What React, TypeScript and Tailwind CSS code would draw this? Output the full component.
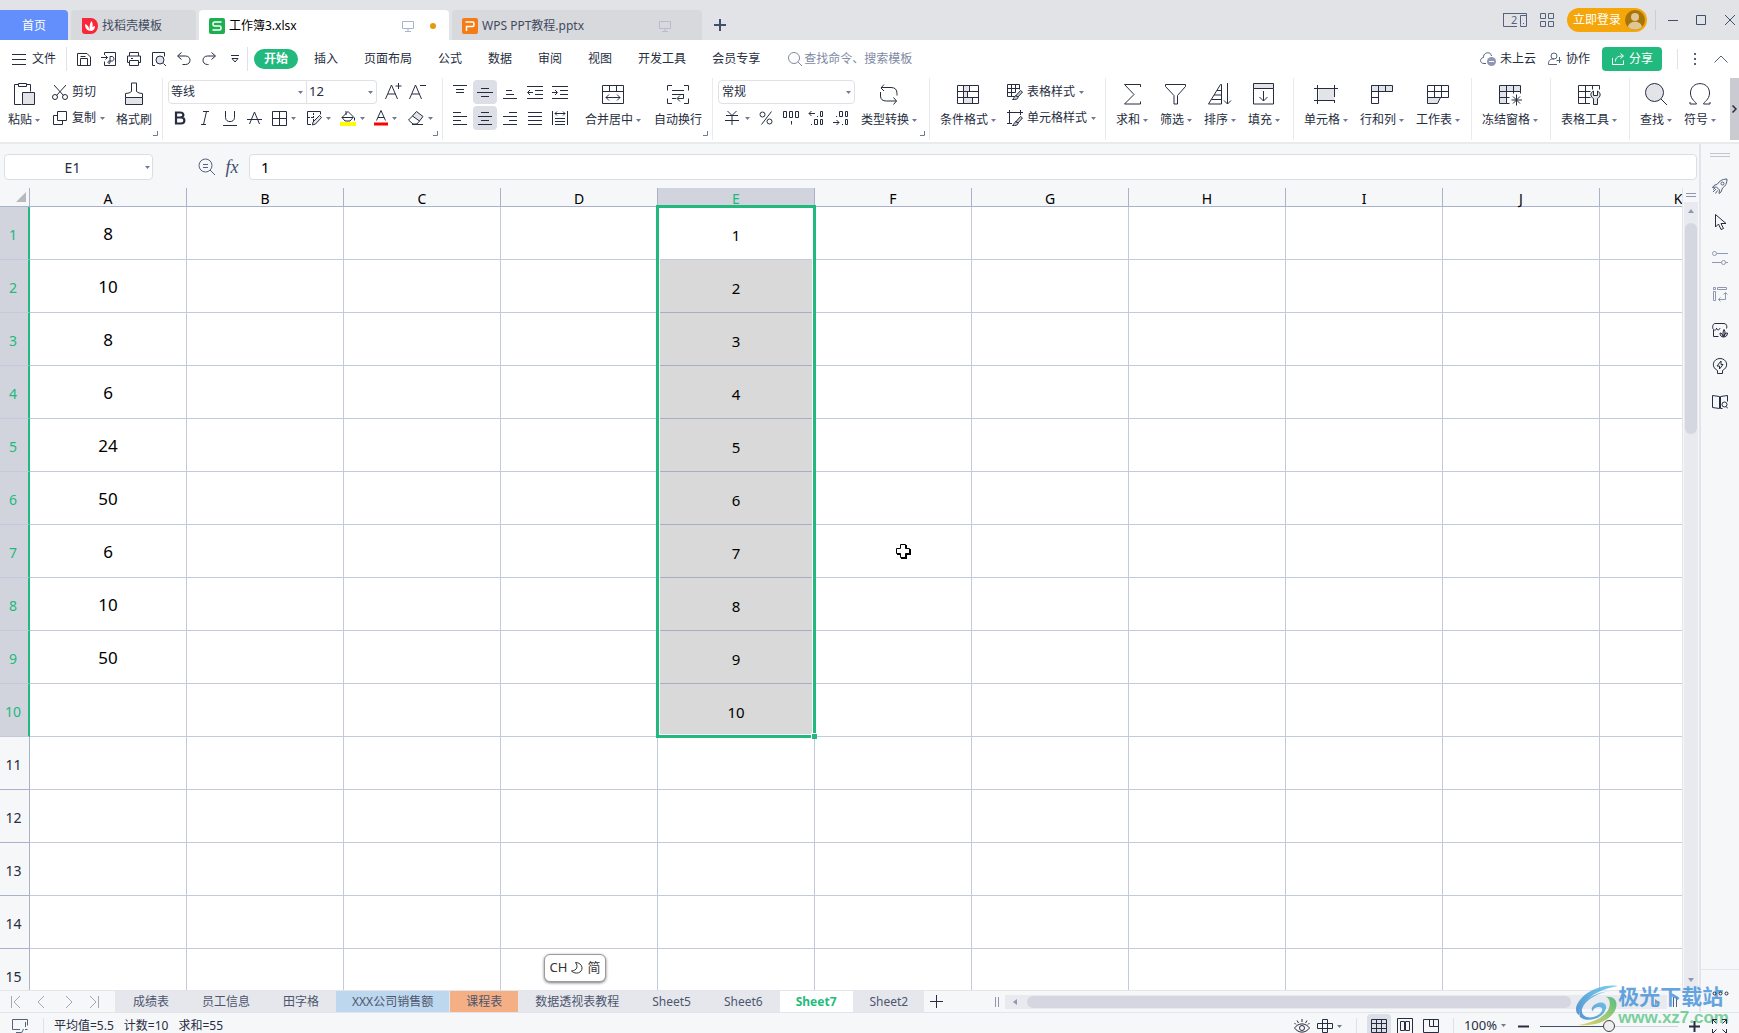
import React, { useState } from 'react';

interface IconProps {
  w?: number;
  h?: number;
  className?: string;
  children: React.ReactNode;
}

// Line icon: one unit of the view box is one pixel
function Icon({ w = 16, h = 16, className = '', children }: IconProps) {
  return (
    <svg
      width={w}
      height={h}
      viewBox={`0 0 ${w} ${h}`}
      fill="none"
      stroke="currentColor"
      strokeWidth={1}
      className={`shrink-0 ${className}`}
      aria-hidden="true"
    >
      {children}
    </svg>
  );
}

function Caret() {
  return (
    <svg width="5" height="3" viewBox="0 0 5 3" className="shrink-0 fill-[#6f7b96]" aria-hidden="true">
      <path d="M0 0h5L2.5 3z" />
    </svg>
  );
}

const soft = '#e3e4e8';

const icons = {
  save: (
    <Icon>
      <path d="M1.500 14.500v-12h9.500l3.500 3.500v8.500zM4.500 14v-6.500h7v6.500M4.500 5.500h5" />
    </Icon>
  ),
  exportPdf: (
    <Icon>
      <path d="M3.500 4v-2.500h11v13h-11v-4M0 6.500h6.500M4.500 4.500l2 2-2 2M8.500 12.500c-2 0-2-2.500 0-2.500h2.500c2.500 0 2.500-4.500 0-4.500H9v5.500c0 1-.5 1.500-1 1.500" />
    </Icon>
  ),
  print: (
    <Icon>
      <path d="M3.500 5v-3.500h9v3.500M3.500 11.500h-2v-6.500h13v6.500h-2M3.500 9.500h9v5h-9zM5 7.500h2" />
    </Icon>
  ),
  preview: (
    <Icon>
      <path d="M4 14.500h-2.500v-13h12v4M12.500 12.500l2.500 2.500" />
      <circle cx="9" cy="9" r="4" fill={soft} />
    </Icon>
  ),
  undo: (
    <Icon>
      <path d="M5.500 1.500l-4 3.500 4 3.500M2 5h7.500c6 0 6 8.500 0 8.500h-3" />
    </Icon>
  ),
  redo: (
    <Icon>
      <path d="M10.500 1.500l4 3.500-4 3.500M14 5h-7.500c-6 0-6 8.500 0 8.500h1" />
    </Icon>
  ),
  paste: (
    <Icon w={22} h={24}>
      <path d="M5 2.500h-3.500v20h7M14 2.500h3.500v7M5.500 1.500h8v3h-8z" />
      <path d="M9.500 10.500h12v12h-12z" fill={soft} />
    </Icon>
  ),
  cut: (
    <Icon>
      <path d="M2 1l9.500 10.500M14 1l-9.500 10.500" />
      <circle cx="3" cy="13" r="2.500" />
      <circle cx="13" cy="13" r="2.500" />
    </Icon>
  ),
  copy: (
    <Icon>
      <path d="M5.500 1.500h9v9h-9zM5 5.500h-3.500v9h9v-4" />
    </Icon>
  ),
  brush: (
    <Icon w={20} h={24}>
      <path d="M1.500 15.500h17v7h-17z" fill={soft} />
      <path d="M1.500 15.500v-4q4 0 6-2v-8.500h5v8.500q2 2 6 2v4" />
    </Icon>
  ),
  merge: (
    <Icon w={24} h={24}>
      <path d="M1.500 3.500h21v18h-21zM1.500 9.500h21M8.500 3.500v6M15.500 3.500v6M5 15.500h14M8 12.500l-3 3 3 3M16 12.500l3 3-3 3" />
    </Icon>
  ),
  wrap: (
    <Icon w={24} h={24}>
      <path d="M6 3.500h-4.500v5M18 3.500h4.500v5M6 21.500h-4.500v-5M18 21.500h4.500v-5M6 8.500h12M6 12.500h12M6 16.500h4M17.500 12.500v4h-6M14 13.500l-3 3 3 3" />
    </Icon>
  ),
  convert: (
    <Icon w={24} h={24}>
      <path d="M7 2.500l-3 3.500 3 3M4 5.500h10q6 0 6 6v2M3.500 10v4q0 5 6 5h10M16.500 15.500l3 3.500-3 3.500" />
    </Icon>
  ),
  condition: (
    <Icon w={24} h={24}>
      <path d="M7.500 3.500h5v6h-5zM7.500 9.500h4v6h-4zM7.500 15.500h9v6h-9z" fill={soft} stroke="none" />
      <path d="M1.500 3.500h21v18h-21zM1.500 9.500h21M1.500 15.500h21M7.500 3.500v18M13.500 3.500v6M11.500 9.500v6M16.500 15.500v6" />
    </Icon>
  ),
  tableStyle: (
    <Icon>
      <path d="M8 12.500h-7.500v-12h12v5M.5 4.500h12M.5 8.500h8M4.500.5v12M8.500.5v8" />
      <path d="M13.500 6.500l2 1.500-4.500 5-2-1.500zM9 11.500l2 2c0 2-3 2-5.500 2 1.500-1 1.500-3 3.500-4z" fill="#c9ccd4" />
    </Icon>
  ),
  cellStyle: (
    <Icon>
      <path d="M2.500 0v14M0 2.500h16M13.500 0v5M0 13.500h5" />
      <path d="M13.500 6.500l2 1.500-4.500 5-2-1.500zM9 11.500l2 2c0 2-3 2-5.500 2 1.500-1 1.500-3 3.500-4z" fill="#c9ccd4" />
    </Icon>
  ),
  sum: (
    <Icon w={22} h={24}>
      <path d="M19.500 5v-2.500h-16l9.500 10-9.500 9.500h16v-2.500" />
    </Icon>
  ),
  filter: (
    <Icon w={24} h={24}>
      <path d="M1.500 2.500h20v2l-8 9v8.500h-3.500v-8.500l-8.500-9z" />
    </Icon>
  ),
  sort: (
    <Icon w={24} h={24}>
      <path d="M.5 22l12-19.500h1v19.500zM9 8.500h4.500M6 13h7.500M3.500 17.500h10M19.500 1v21M16 18.500l3.500 3.500 3.500-3.500" />
    </Icon>
  ),
  fillDown: (
    <Icon w={24} h={24}>
      <path d="M1.500 1.500h20v5h-20z" fill={soft} />
      <path d="M1.500 6.500v15.500h20v-15.500M11.500 9v10M7.500 15l4 4 4-4" />
    </Icon>
  ),
  cell: (
    <Icon w={24} h={24}>
      <path d="M4.500 6.500h16v12h-16z" fill={soft} stroke="none" />
      <path d="M0 6.500h24M0 18.500h20M3.500 3v19M20.500 3v12M20.500 18v3" />
    </Icon>
  ),
  rowCol: (
    <Icon w={24} h={24}>
      <path d="M1.500 3.500h21v6h-21z" fill={soft} />
      <path d="M8.500 9.500v12h-7v-18M8.500 3.500v6M15.500 3.500v6M1.500 15.500h7" />
    </Icon>
  ),
  sheet: (
    <Icon w={24} h={24}>
      <path d="M1.500 15.500h13l-3 6h-10z" fill={soft} />
      <path d="M1.500 3.500h21v12h-21zM1.500 9.500h21M8.500 3.500v12M15.500 3.500v12" />
    </Icon>
  ),
  freeze: (
    <Icon w={24} h={24}>
      <path d="M1.500 3.500h21v6h-14v12h-7z" fill={soft} />
      <path d="M1.500 9.500h7M1.500 15.500h10M8.500 3.500v6M15.500 3.500v8M22.500 9.500v2M8.500 21.500h3M18.500 12.500v11M13.500 18h10.500M15 14.500l7 7M22 14.500l-7 7" />
    </Icon>
  ),
  tableTool: (
    <Icon w={24} h={24}>
      <path d="M13 21.500h-11.500v-18h21v4M1.500 9.500h12M1.500 15.500h12M8.500 3.500v18M15.500 3.500v4" />
      <path d="M16.500 9c-4 2-3 6 0 7.500v6h4v-6c3-1.500 4-5.500 0-7.500v4.500h-4z" fill={soft} />
    </Icon>
  ),
  find: (
    <Icon w={24} h={24}>
      <circle cx="10.500" cy="10.500" r="9" fill={soft} />
      <path d="M17 17l6 6" />
    </Icon>
  ),
  omega: (
    <Icon w={24} h={24}>
      <path d="M2 20v2h6.500c0-2-6-4-6-11 0-12.500 19-12.500 19 0 0 7-6 9-6 11h6.500v-2" />
    </Icon>
  ),
};

interface BigProps {
  icon: React.ReactNode;
  label: string;
  caret?: boolean;
}

function Big({ icon, label, caret = true }: BigProps) {
  return (
    <button className="flex h-[52px] shrink-0 flex-col items-center justify-between">
      <span className="flex h-7 items-center">{icon}</span>
      <span className="flex h-6 items-center gap-[3px]">
        {label}
        {caret && <Caret />}
      </span>
    </button>
  );
}

function Small({ icon, label, caret = true }: BigProps) {
  return (
    <button className="flex h-6 items-center gap-1">
      {icon}
      {label}
      {caret && <Caret />}
    </button>
  );
}

function Corner() {
  return (
    <svg width="5" height="5" viewBox="0 0 5 5" fill="none" stroke="#6f7b96" className="absolute right-1 bottom-1" aria-hidden="true">
      <path d="M4.500 0v4.500H0" />
    </svg>
  );
}

function Group({ children, corner, className = '' }: { children: React.ReactNode; corner?: boolean; className?: string }) {
  return (
    <div className={`relative flex h-[62px] shrink-0 items-start border-r border-[#eaebee] pt-[2px] ${className}`}>
      {children}
      {corner && <Corner />}
    </div>
  );
}

function Split({ label, children, className = '' }: { label: string; children: React.ReactNode; className?: string }) {
  return (
    <button aria-label={label} className={`flex h-6 w-[34px] shrink-0 items-center gap-1 ${className}`}>
      {children}
      <Caret />
    </button>
  );
}

const alignRows = [
  [
    { name: '顶端对齐', on: false, d: 'M1 1.500h14M4 5.500h8M4 8.500h8' },
    { name: '垂直居中', on: true, d: 'M4 4.500h8M0 8.500h16M4 12.500h8' },
    { name: '底端对齐', on: false, d: 'M4 6.500h6M4 10.500h8M1 14.500h14' },
    { name: '减少缩进', on: false, d: 'M0 2.500h16M8 6.500h8M8 10.500h8M0 14.500h16M1 8.500h5M3 6l-2.500 2.500L3 11' },
    { name: '增加缩进', on: false, d: 'M0 2.500h16M8 6.500h8M8 10.500h8M0 14.500h16M0 8.500h5M3 6l2.500 2.500L3 11' },
  ],
  [
    { name: '左对齐', on: false, d: 'M1 2.500h8M1 6.500h14M1 10.500h8M1 14.500h14' },
    { name: '水平居中', on: true, d: 'M4 2.500h8M1 6.500h14M4 10.500h8M1 14.500h14' },
    { name: '右对齐', on: false, d: 'M7 2.500h8M1 6.500h14M7 10.500h8M1 14.500h14' },
    { name: '两端对齐', on: false, d: 'M1 2.500h14M1 6.500h14M1 10.500h14M1 14.500h14' },
    { name: '分散对齐', on: false, d: 'M.5 1v14M15.500 1v14M3 3.500h10M5 1.500L3 3.500l2 2M11 1.500l2 2-2 2M3 8.500h10M3 11.500h10M3 14.500h10' },
  ],
];

const menus = ['插入', '页面布局', '公式', '数据', '审阅', '视图', '开发工具', '会员专享'];

const columns = ['A', 'B', 'C', 'D', 'E', 'F', 'G', 'H', 'I', 'J', 'K'];
const columnA = [8, 10, 8, 6, 24, 50, 6, 10, 50];
const selectedRows = 10;

const sheets = [
  { name: '成绩表', tone: 'text-[#4d566e]' },
  { name: '员工信息', tone: 'text-[#4d566e]' },
  { name: '田字格', tone: 'text-[#4d566e]' },
  { name: 'XXX公司销售额', tone: 'bg-[#bdd7ee] text-[#4d566e]' },
  { name: '课程表', tone: 'bg-[#f4b084] text-[#4d566e]' },
  { name: '数据透视表教程', tone: 'text-[#4d566e]' },
  { name: 'Sheet5', tone: 'text-[#4d566e]' },
  { name: 'Sheet6', tone: 'text-[#4d566e]' },
  { name: 'Sheet7', tone: 'bg-white font-bold text-[#1fbb7d]' },
  { name: 'Sheet2', tone: 'text-[#4d566e]' },
];

function Monitor({ className }: { className: string }) {
  return (
    <Icon w={12} h={12} className={className}>
      <path d="M.5 1.500h11v7h-11zM6 8.500v2.500M3 11.500h6" />
    </Icon>
  );
}

function TitleBar() {
  return (
    <header className="flex h-10 shrink-0 items-end bg-[#e2e3e7] text-[#414a60]">
      <button className="h-[30px] w-[68px] rounded-tr bg-[#628ffb] pt-[2px] text-white">首页</button>
      <button className="ml-[3px] flex h-[30px] w-[125px] items-center gap-1 rounded-t bg-[#d8d9dc] pt-[2px] pl-[11px]">
        <svg width="16" height="16" viewBox="0 0 16 16" aria-hidden="true">
          <path d="M0 0h9a7 8 0 0 1 0 16H3a3 3 0 0 1-3-3z" fill="#f8283a" />
          <path d="M8 13C4 12 3 9 3 6c3 1 4.500 4 5 7zM8 13C7 8 8 5 9.500 3c2 3 1.500 7-1.500 10zM8.500 13c.5-3 2-4.500 4.500-5 0 3-2 5-4.500 5z" fill="#fff" />
        </svg>
        找稻壳模板
      </button>
      <button className="ml-[3px] flex h-[30px] w-[250px] items-center gap-1 rounded-t bg-white pt-[2px] pl-[10px] text-black">
        <svg width="16" height="16" viewBox="0 0 16 16" aria-hidden="true">
          <rect width="16" height="16" rx="2" fill="#1cae4f" />
          <path d="M12.500 4h-7a1.500 1.500 0 0 0-1.500 1.500v1A1.500 1.500 0 0 0 5.500 8h5A1.500 1.500 0 0 1 12 9.500v1a1.500 1.500 0 0 1-1.500 1.500h-7" fill="none" stroke="#fff" strokeWidth="1.500" />
        </svg>
        工作簿3.xlsx
        <Monitor className="ml-auto text-[#a9b3cb]" />
        <span className="mr-[13px] ml-3 size-[6px] rounded-full bg-[#e59a0c]" />
      </button>
      <button className="ml-[3px] flex h-[30px] w-[250px] items-center gap-1 rounded-t bg-[#d8d9dc] pt-[2px] pl-[10px]">
        <svg width="16" height="16" viewBox="0 0 16 16" aria-hidden="true">
          <rect width="16" height="16" rx="2" fill="#f57c14" />
          <path d="M4.500 13V8.500h6A1.500 1.500 0 0 0 12 7V5.500A1.500 1.500 0 0 0 10.500 4H3.500" fill="none" stroke="#fff" strokeWidth="1.500" />
        </svg>
        WPS PPT教程.pptx
        <Monitor className="mr-[31px] ml-auto text-[#b5bbd0]" />
      </button>
      <button aria-label="新建标签" className="ml-3 flex h-[30px] items-center">
        <svg width="12" height="12" viewBox="0 0 12 12" stroke="#414f6e" strokeWidth="2" aria-hidden="true">
          <path d="M6 0v12M0 6h12" />
        </svg>
      </button>
      <div className="ml-auto flex h-10 items-center text-[#56617e]">
        <button aria-label="窗口布局" className="mr-[13px]">
          <Icon w={24} h={14}>
            <path d="M14 .5H.5v13H14M17.500 2.500h6M17.500 11.500v-9M0 .5h23.500v13h-6v-2M20 10.500h1" />
            <text x="8" y="11" fontSize="11" fill="currentColor" stroke="none">2</text>
          </Icon>
        </button>
        <button aria-label="应用" className="mr-[13px]">
          <Icon w={14} h={14}>
            <path d="M.5.5h5v5h-5zM8.500.5h5v5h-5zM.5 8.500h5v5h-5zM8.500 8.500h5v5h-5z" />
          </Icon>
        </button>
        <button className="flex h-6 w-20 items-center justify-between rounded-full bg-[#f5a60a] pr-[2px] pl-[6px] text-white">
          立即登录
          <svg width="20" height="20" viewBox="0 0 20 20" aria-hidden="true">
            <circle cx="10" cy="10" r="10" fill="#a87509" />
            <circle cx="10" cy="7" r="4" fill="#dfc693" />
            <path d="M3 17c1-7 13-7 14 0a10 10 0 0 1-14 0z" fill="#dfc693" />
          </svg>
        </button>
        <span className="ml-2 h-5 w-px bg-[#cbced6]" />
        <button aria-label="最小化" className="ml-3 text-[#414f6e]"><Icon w={10} h={10}><path d="M0 5.500h10" /></Icon></button>
        <button aria-label="最大化" className="ml-[18px] text-[#414f6e]"><Icon w={10} h={10}><path d="M.5.5h9v9h-9z" /></Icon></button>
        <button aria-label="关闭" className="mr-1 ml-[19px] text-[#414f6e]"><Icon w={10} h={10}><path d="M0 0l10 10M10 0L0 10" /></Icon></button>
      </div>
    </header>
  );
}

function MenuBar() {
  return (
    <nav className="flex h-[38px] shrink-0 items-center text-[#262d40]">
      <button className="flex items-center gap-[6px] pl-3">
        <Icon w={14} h={12}><path d="M0 1.500h14M0 6.500h14M0 11.500h14" /></Icon>
        文件
      </button>
      <span className="mr-[9px] ml-[10px] h-6 w-px bg-[#dfe1e6]" />
      <div className="flex items-center gap-[9px]">
        <button aria-label="保存">{icons.save}</button>
        <button aria-label="输出为PDF">{icons.exportPdf}</button>
        <button aria-label="打印">{icons.print}</button>
        <button aria-label="打印预览">{icons.preview}</button>
        <button aria-label="撤销">{icons.undo}</button>
        <button aria-label="恢复">{icons.redo}</button>
      </div>
      <button aria-label="自定义快速访问" className="ml-[14px]">
        <Icon w={8} h={8}><path d="M0 .5h8M1 3.500h6L4 7z" /></Icon>
      </button>
      <span className="mr-[6px] ml-2 h-6 w-px bg-[#dfe1e6]" />
      <button className="h-5 w-11 rounded-full bg-[#21b97e] font-bold text-white">开始</button>
      <div className="ml-4 flex gap-[26px]">
        {menus.map((m) => (
          <button key={m}>{m}</button>
        ))}
      </div>
      <label className="ml-7 flex items-center gap-[2px] text-[#8089a3]">
        <Icon w={14} h={14}>
          <circle cx="6" cy="6" r="5.500" />
          <path d="M10 10l4 4" />
        </Icon>
        <input className="w-32 outline-none placeholder:text-[#8089a3]" placeholder="查找命令、搜索模板" aria-label="查找命令" />
      </label>
      <div className="ml-auto flex items-center">
        <button className="flex items-center gap-1">
          <Icon className="text-[#56617e]">
            <path d="M6 12.500H4C-.5 12.500-.5 7 3.500 6.500 3 1 11 0 11.500 5" />
            <circle cx="11.500" cy="10.500" r="4.500" fill="#8f98b3" stroke="none" />
            <path d="M9 10.500h5" stroke="#fff" />
          </Icon>
          未上云
        </button>
        <button className="ml-3 flex items-center gap-1">
          <Icon w={14} h={14} className="text-[#56617e]">
            <circle cx="6" cy="4" r="3" />
            <path d="M9 12.500H.5c0-5 2-5.500 5.500-5.500M11.500 5v6M8.500 8.500h5" />
          </Icon>
          协作
        </button>
        <button className="ml-3 flex h-6 w-[60px] items-center justify-center gap-1 rounded bg-[#21b97e] text-white">
          <Icon w={14} h={14}>
            <path d="M1.500 6v6.500h11v-4M4.500 9.500c0-4 2-5.500 7.500-5.500M9.500 1.500L12.500 4 9.500 6.500" />
          </Icon>
          分享
        </button>
        <span className="ml-[15px] h-5 w-px bg-[#dfe1e6]" />
        <button aria-label="更多" className="ml-4">
          <svg width="2" height="12" viewBox="0 0 2 12" fill="#56617e" aria-hidden="true">
            <path d="M0 0h2v2H0zM0 5h2v2H0zM0 10h2v2H0z" />
          </svg>
        </button>
        <button aria-label="收起功能区" className="mr-[11px] ml-[18px]">
          <Icon w={14} h={8} className="text-[#56617e]"><path d="M.5 7.500L7 1l6.500 6.500" /></Icon>
        </button>
      </div>
    </nav>
  );
}

function Ribbon() {
  const [font, setFont] = useState('等线');
  const [size, setSize] = useState('12');
  const [format, setFormat] = useState('常规');

  return (
    <div className="flex h-[66px] shrink-0 overflow-hidden border-b-2 border-[#e9eaed] text-[#262d40]">
      <Group corner className="w-[163px] pl-2">
        <Big icon={icons.paste} label="粘贴" />
        <div className="ml-3 flex flex-col gap-[2px]">
          <Small icon={icons.cut} label="剪切" caret={false} />
          <Small icon={icons.copy} label="复制" />
        </div>
        <div className="ml-[11px] flex">
          <Big icon={icons.brush} label="格式刷" caret={false} />
        </div>
      </Group>

      <Group corner className="w-[280px] flex-col gap-[2px] pl-[5px]">
        <div className="flex h-6 items-center">
          <div className="relative flex h-6 items-center">
            <select
              aria-label="字体"
              value={font}
              onChange={(e) => setFont(e.target.value)}
              className="h-6 w-[139px] appearance-none rounded-l border border-[#dfe1e6] px-[2px] outline-none"
            >
              <option>等线</option>
            </select>
            <span className="pointer-events-none absolute right-1"><Caret /></span>
          </div>
          <div className="relative flex h-6 items-center">
            <select
              aria-label="字号"
              value={size}
              onChange={(e) => setSize(e.target.value)}
              className="h-6 w-[70px] appearance-none rounded-r border border-l-0 border-[#dfe1e6] px-[2px] text-[13px] outline-none"
            >
              <option>12</option>
            </select>
            <span className="pointer-events-none absolute right-1"><Caret /></span>
          </div>
          <button aria-label="增大字号" className="ml-2">
            <Icon w={17} h={18}><path d="M.5 16L6.500 2l6 14M3 11h7.500M13.500 0v6M10.500 3h6" /></Icon>
          </button>
          <button aria-label="减小字号" className="ml-[7px]">
            <Icon w={17} h={18}><path d="M.5 16L6.500 2l6 14M3 11h7.500M11 2.500h6" /></Icon>
          </button>
        </div>
        <div className="flex h-6 items-center">
          <button aria-label="加粗" className="flex w-6 justify-center">
            <Icon w={12} h={14}><path d="M2 1.500h4c4.500 0 4.500 5 0 5h-4zM2 6.500h5c4.500 0 4.500 6 0 6h-5z" strokeWidth="2.200" /></Icon>
          </button>
          <button aria-label="倾斜" className="flex w-[25px] justify-center">
            <Icon w={10} h={14}><path d="M3 .5h6M1 13.500h5M6.500.5l-3 13" /></Icon>
          </button>
          <button aria-label="下划线" className="flex w-[25px] justify-center">
            <Icon w={14} h={16}><path d="M2.500 1v6.500c0 5.500 9 5.500 9 0v-6.500M0 15.500h14" /></Icon>
          </button>
          <button aria-label="删除线" className="flex w-[25px] justify-center">
            <Icon w={15} h={16}><path d="M2.500 14L7.500 2l5 12M0 9.500h15" /></Icon>
          </button>
          <Split label="边框" className="ml-[5px]">
            <Icon w={15} h={15}><path d="M.5.5h14v14h-14zM7.500.5v14M.5 7.500h14" /></Icon>
          </Split>
          <Split label="绘制边框">
            <Icon w={16} h={16}>
              <path d="M5 14.500h-3.500v-13h13v3" />
              <path d="M2 7.500h5M7.500 3v9" strokeDasharray="2 1" />
              <path d="M13.500 5.500l2 2-6 6.500-3 1 .5-3z" fill={soft} />
            </Icon>
          </Split>
          <Split label="填充颜色">
            <Icon>
              <path d="M2 7.500L8 1.500l5.500 5.500-3.500 4h-5zM6 1v4M2 7.500h11" />
              <path d="M14.500 7.500v3" />
              <path d="M0 14h16" stroke="#fdfd00" strokeWidth="4" />
            </Icon>
          </Split>
          <Split label="字体颜色">
            <Icon w={14} h={16}>
              <path d="M2.500 10.500l4.500-10 4.500 10M4 7.500h6" />
              <path d="M0 14h14" stroke="#f00" strokeWidth="3" />
            </Icon>
          </Split>
          <Split label="清除">
            <Icon>
              <path d="M4.500 6l4-4.500 6.500 5-3.500 4.500z" fill={soft} />
              <path d="M4.500 6l-4 4 4.500 4h4l2.500-3" />
              <path d="M4 14.500h11" />
            </Icon>
          </Split>
        </div>
      </Group>

      <Group corner className="w-[270px] pl-[5px]">
        <div className="flex flex-col gap-[2px]">
          {alignRows.map((row, i) => (
            <div key={i} className="flex gap-px">
              {row.map((a) => (
                <button
                  key={a.name}
                  aria-label={a.name}
                  className={`flex size-6 items-center justify-center rounded-sm ${a.on ? 'bg-[#dce0e6]' : ''}`}
                >
                  <Icon><path d={a.d} /></Icon>
                </button>
              ))}
            </div>
          ))}
        </div>
        <div className="ml-[13px] flex gap-[13px]">
          <Big icon={icons.merge} label="合并居中" />
          <Big icon={icons.wrap} label="自动换行" caret={false} />
        </div>
      </Group>

      <Group corner className="w-[217px] pl-[5px]">
        <div className="flex flex-col gap-[2px]">
          <div className="relative flex h-6 items-center">
            <select
              aria-label="数字格式"
              value={format}
              onChange={(e) => setFormat(e.target.value)}
              className="h-6 w-[137px] appearance-none rounded border border-[#dfe1e6] px-[3px] outline-none"
            >
              <option>常规</option>
            </select>
            <span className="pointer-events-none absolute right-1"><Caret /></span>
          </div>
          <div className="flex h-6 items-center">
            <button aria-label="货币" className="ml-[7px] flex items-center gap-[6px]">
              <Icon w={14} h={14}><path d="M2.500 0l4.500 4.500 4.500-4.500M1 4.500h12M0 9.500h14M7 4.500v9.500" /></Icon>
              <Caret />
            </button>
            <button aria-label="百分比" className="ml-[9px]">
              <Icon w={14} h={14}>
                <path d="M12.500.5l-10 13" />
                <circle cx="3.500" cy="3.500" r="2.500" />
                <circle cx="10.500" cy="10.500" r="2.500" />
              </Icon>
            </button>
            <button aria-label="千位分隔" className="ml-[10px]">
              <Icon w={17} h={16}>
                <path d="M.5 1.500h3v6h-3zM6.500 1.500h3v6h-3zM12.500 1.500h3v6h-3zM8.500 11v3.500" />
              </Icon>
            </button>
            <button aria-label="增加小数位" className="ml-2">
              <Icon w={17} h={16}>
                <path d="M1 3.500h6M3.500 1L1 3.500 3.500 6M9 6.500h1M12.500 1.500h2v5h-2zM3 14.500h1M6.500 9.500h3v5h-3zM12.500 9.500h2v5h-2z" />
              </Icon>
            </button>
            <button aria-label="减少小数位" className="ml-2">
              <Icon w={17} h={16}>
                <path d="M3 6.500h1M6.500 1.500h3v5h-3zM12.500 1.500h2v5h-2zM0 12.500h6M3.500 10L6 12.500 3.500 15M9 14.500h1M12.500 9.500h2v5h-2z" />
              </Icon>
            </button>
          </div>
        </div>
        <div className="ml-[6px] flex">
          <Big icon={icons.convert} label="类型转换" />
        </div>
      </Group>

      <Group className="w-[176px] gap-[11px] pl-[10px]">
        <Big icon={icons.condition} label="条件格式" />
        <div className="flex flex-col gap-[2px]">
          <Small icon={icons.tableStyle} label="表格样式" />
          <Small icon={icons.cellStyle} label="单元格样式" />
        </div>
      </Group>

      <Group className="w-[188px] gap-3 pl-[10px]">
        <Big icon={icons.sum} label="求和" />
        <Big icon={icons.filter} label="筛选" />
        <Big icon={icons.sort} label="排序" />
        <Big icon={icons.fillDown} label="填充" />
      </Group>

      <Group className="w-[178px] gap-3 pl-[10px]">
        <Big icon={icons.cell} label="单元格" />
        <Big icon={icons.rowCol} label="行和列" />
        <Big icon={icons.sheet} label="工作表" />
      </Group>

      <Group className="w-[79px] pl-[10px]">
        <Big icon={icons.freeze} label="冻结窗格" />
      </Group>

      <Group className="w-[79px] pl-[10px]">
        <Big icon={icons.tableTool} label="表格工具" />
      </Group>

      <div className="flex shrink-0 items-start gap-3 pt-[2px] pl-[10px]">
        <Big icon={icons.find} label="查找" />
        <Big icon={icons.omega} label="符号" />
      </div>

      <button aria-label="更多功能" className="ml-auto flex h-[62px] w-[9px] shrink-0 items-center justify-center bg-[#c9cbd1]">
        <Icon w={5} h={8}><path d="M.5.5L4 4 .5 7.500" strokeWidth="1.500" /></Icon>
      </button>
    </div>
  );
}

function FormulaBar() {
  return (
    <div className="flex h-11 shrink-0 items-center pt-[2px] pr-[2px] pl-1 text-[#262d40]">
      <div className="relative flex items-center">
        <input aria-label="名称框" defaultValue="E1" className="h-[26px] w-[149px] rounded border border-[#dcdee3] bg-white pr-3 text-center text-sm outline-none" />
        <span className="pointer-events-none absolute right-[3px]"><Caret /></span>
      </div>
      <button aria-label="浏览公式结果" className="ml-[45px] text-[#56617e]">
        <Icon w={18} h={18}>
          <circle cx="7.500" cy="7.500" r="6.500" />
          <path d="M12 12l5 5M5 6.500h5M5 9.500h5" />
        </Icon>
      </button>
      <button aria-label="插入函数" className="ml-2 w-4 text-center font-['Liberation_Serif'] text-lg text-[#414f6e] italic">fx</button>
      <input aria-label="编辑栏" defaultValue="1" className="ml-[9px] h-[26px] min-w-0 flex-1 rounded border border-[#dcdee3] bg-white px-[11px] text-[15px] text-black outline-none" />
    </div>
  );
}

function Grid() {
  return (
    <div className="relative min-w-0 flex-1 overflow-hidden bg-white">
      <table className="w-max table-fixed border-separate border-spacing-0 text-center">
        <colgroup>
          <col className="w-[30px]" />
          {columns.map((c) => (
            <col key={c} className="w-[157px]" />
          ))}
        </colgroup>
        <thead>
          <tr className="h-[19px] bg-[#f6f7f9] text-sm leading-none text-black">
            <th className="border-r border-b border-[#a9b2cb] p-0">
              <svg width="10" height="10" viewBox="0 0 10 10" className="ml-auto mr-[3px] fill-[#b8b9bc]" aria-hidden="true">
                <path d="M10 0v10H0z" />
              </svg>
            </th>
            {columns.map((c) => (
              <th
                key={c}
                scope="col"
                className={`border-r border-b border-[#a9b2cb] p-0 pt-[3px] font-normal ${c === 'E' ? 'bg-[#d1d4dc] text-[#21b97e]' : ''}`}
              >
                {c}
              </th>
            ))}
          </tr>
        </thead>
        <tbody>
          {Array.from({ length: 15 }, (_, r) => (
            <tr key={r} className="h-[53px]">
              <th
                scope="row"
                className={`border-b p-0 pt-[3px] pr-[2px] text-sm font-normal ${
                  r < selectedRows
                    ? 'border-r-2 border-r-[#21b97e] border-b-[#c3cadb] bg-[#d1d4dc] text-[#21b97e]'
                    : 'border-r border-r-[#a9b2cb] border-b-[#a9b2cb] bg-[#f6f7f9] text-[#262d40]'
                }`}
              >
                {r + 1}
              </th>
              {columns.map((c) => {
                const picked = c === 'E' && r > 0 && r < selectedRows;
                return (
                  <td
                    key={c}
                    className={`relative border-r border-b p-0 pt-[3px] text-black ${
                      picked ? 'border-[#a6aec0] bg-[#d9d9d9]' : 'border-[#c3cadb]'
                    } ${c === 'E' ? 'text-[15px]' : 'text-[17px]'}`}
                  >
                    {c === 'A' && columnA[r]}
                    {c === 'E' && r < selectedRows && r + 1}
                    {c === 'E' && r === 0 && (
                      <div className="pointer-events-none absolute -top-[2px] -left-[2px] z-10 h-[533px] w-[160px] border-[3px] border-[#21b97e]">
                        <div className="h-full border border-white" />
                        <div className="absolute -right-1 -bottom-1 size-[6px] border-t border-l border-white bg-[#21b97e]" />
                      </div>
                    )}
                  </td>
                );
              })}
            </tr>
          ))}
        </tbody>
      </table>

      {/* mouse pointer over F7 */}
      <svg width="16" height="16" viewBox="0 0 16 16" className="absolute top-[356px] left-[896px]" aria-hidden="true">
        <path d="M5 1h6v4h4v6h-4v4H5v-4H1V5h4z" fill="#000" />
        <path d="M4.500.5h5v4h4v5h-4v4h-5v-4h-4v-5h4z" fill="#fff" stroke="#000" />
      </svg>

      {/* input method badge */}
      <div className="absolute bottom-2 left-[544px] flex h-7 w-[62px] items-center justify-center gap-1 rounded-md border border-[#9b9b9b] bg-white text-[13px] text-[#333] shadow-[0_1px_3px_#777]">
        CH
        <Icon w={12} h={12}><path d="M4.500.5c3 4 1.500 8-4 8.500 4 4 11 2 10.500-3.500C10.500 2.500 8 .5 4.500.5z" /></Icon>
        简
      </div>
    </div>
  );
}

function VerticalScroll() {
  return (
    <div className="flex w-[17px] shrink-0 flex-col items-center border-l border-[#e4e5ea]">
      <Icon w={10} h={14} className="text-[#8f98b0]"><path d="M0 5.500h10M0 8.500h10" /></Icon>
      <div className="flex w-[14px] flex-1 flex-col items-center bg-[#e9eaf0]">
        <svg width="6" height="4" viewBox="0 0 6 4" className="mt-[7px] fill-[#8f98b0]" aria-hidden="true"><path d="M3 0l3 4H0z" /></svg>
        <div className="mt-[10px] h-[211px] w-3 rounded-full bg-[#d4d7df]" />
        <svg width="6" height="4" viewBox="0 0 6 4" className="mt-auto mb-2 fill-[#8f98b0]" aria-hidden="true"><path d="M0 0h6L3 4z" /></svg>
      </div>
    </div>
  );
}

function SheetBar() {
  return (
    <div className="flex h-[22px] shrink-0 border-t border-[#e4e5ea]">
      <div className="flex w-[115px] shrink-0 items-center gap-4 pl-[11px] text-[#a3a8b5]">
        <button aria-label="第一张"><Icon w={10} h={14}><path d="M.5 1v12M9 1L3 7l6 6" /></Icon></button>
        <button aria-label="上一张"><Icon w={10} h={14}><path d="M7 1L1 7l6 6" /></Icon></button>
        <button aria-label="下一张"><Icon w={10} h={14}><path d="M3 1l6 6-6 6" /></Icon></button>
        <button aria-label="最后一张"><Icon w={10} h={14}><path d="M1 1l6 6-6 6M9.500 1v12" /></Icon></button>
      </div>
      <div className="flex shrink-0 gap-px bg-[#e6e7ed] pl-[2px]">
        {sheets.map((s) => (
          <button key={s.name} className={`px-4 ${s.tone}`}>
            {s.name}
          </button>
        ))}
      </div>
      <button aria-label="新建工作表" className="ml-[6px] text-[#262d40]">
        <Icon w={13} h={13}><path d="M6.500 0v13M0 6.500h13" /></Icon>
      </button>
      <div className="ml-[52px] flex min-w-0 flex-1 items-center">
        <Icon w={4} h={10} className="text-[#8f98b0]"><path d="M.5 0v10M3.500 0v10" /></Icon>
        <div className="ml-[6px] flex h-[14px] min-w-0 flex-1 items-center bg-[#e9eaf0]">
          <svg width="4" height="6" viewBox="0 0 4 6" className="ml-2 shrink-0 fill-[#8f98b0]" aria-hidden="true"><path d="M4 0v6L0 3z" /></svg>
          <div className="mr-[84px] ml-[10px] h-3 flex-1 rounded-full bg-[#d4d7df]" />
          <svg width="4" height="6" viewBox="0 0 4 6" className="mr-2 shrink-0 fill-[#8f98b0]" aria-hidden="true"><path d="M0 0v6l4-3z" /></svg>
        </div>
        <Icon w={4} h={10} className="mr-[22px] ml-[6px] text-[#56617e]"><path d="M.5 0v10M3.500 0v10" /></Icon>
      </div>
    </div>
  );
}

function SideBar() {
  return (
    <aside className="flex w-10 shrink-0 flex-col items-center border-l-2 border-[#e4e5ea] text-[#262d40]">
      <Icon w={20} h={4} className="mt-[9px] text-[#c3c6cf]"><path d="M0 .5h20M0 3.500h20" /></Icon>
      <div className="mt-[21px] flex flex-col gap-5">
        <button aria-label="快捷工具" className="text-[#56617e]">
          <Icon>
            <path d="M15 1c-5 0-7.500 2-9.500 5L2 7.500.5 9.500l4-.5 3 3-.5 3.500 2-1.500 1.500-4C13.500 8 15 5.500 15 1zM4 11l-3 3M5.500 12.500l-2 3M3 10l-2 1.500" />
            <circle cx="10.500" cy="5.500" r="1.500" />
          </Icon>
        </button>
        <button aria-label="选择">
          <Icon><path d="M3.500.5v12.500l3-3 2.500 5.500 2.500-1-2.500-5h5z" /></Icon>
        </button>
        <button aria-label="属性" className="text-[#8f98b0]">
          <Icon>
            <circle cx="2.500" cy="3.500" r="2" />
            <circle cx="11.500" cy="12.500" r="2" />
            <path d="M5 3.500h11M0 12.500h9.500M13.500 12.500h2.500" />
          </Icon>
        </button>
        <button aria-label="分析" className="text-[#8f98b0]">
          <Icon><path d="M1.500 1.500h2v2h-2zM5.500 1.500h9v2h-9zM1.500 5.500h2v9h-2zM13.500 6.500v7h-7M11.500 8.500l2-2 2 2M8.500 11.500l-2 2 2 2" /></Icon>
        </button>
        <button aria-label="模板">
          <Icon>
            <path d="M6.500 14.500h-5V8M1.500 7.500c-1.500-1-1-6 1.500-6h9c2.500 0 3.500 3 2.500 5M1.500 7.500c1 1 3 1 3-1.500 .5 2.500 3 2.500 3.500 0" />
            <path d="M11.500 15c-2.500 0-3.500-1.500-3.500-4 1.500 0 2.500 1 3.500 4zM11.500 15c-1-3-.5-5.500.5-7.500 1.500 2 1.500 5-.5 7.500zM11.500 15c.5-3 2-4 4-4 0 2.500-1.500 4-4 4z" fill="#c9ccd4" />
          </Icon>
        </button>
        <button aria-label="智能">
          <Icon><path d="M5.500 12.500C-1.500 9 1 .5 8 .5s9.500 8.500 2.500 12v3h-5zM9 3L5 8h2.500v3L11 6.500H9z" /></Icon>
        </button>
        <button aria-label="帮助">
          <Icon>
            <path d="M7.500 2.500L.5 1.500v12l7 1zM8.500 2.500l7-1v6M8.500 2.500v12h2" />
            <circle cx="12.500" cy="10.500" r="2.500" />
            <path d="M14 12.500l2 2" />
          </Icon>
        </button>
      </div>
      <button aria-label="更多面板" className="relative z-10 mt-auto flex h-[43px] w-full items-center justify-center border-t border-[#e4e5ea] pt-1">
        <Icon w={17} h={5}>
          <circle cx="2.500" cy="2.500" r="1.500" />
          <circle cx="8.500" cy="2.500" r="1.500" />
          <circle cx="14.500" cy="2.500" r="1.500" />
        </Icon>
      </button>
    </aside>
  );
}

function StatusBar() {
  const [zoom, setZoom] = useState(100);

  return (
    <footer className="h-[21px] shrink-0 overflow-hidden border-t border-[#e4e5ea] text-[#262d40]">
      <div className="relative z-10 flex h-[26px] items-center">
        <button aria-label="宏" className="ml-3 text-[#56617e]">
          <Icon><path d="M8 11.500H.5v-10h15v6M4 14.500h5M13.500 4v5M9.500 15l2-4M13 11.500h2.500" /></Icon>
        </button>
        <span className="ml-[15px] h-4 w-px bg-[#dfe1e6]" />
        <div className="ml-[10px] flex gap-[10px]">
          <span>平均值=5.5</span>
          <span>计数=10</span>
          <span>求和=55</span>
        </div>
        <div className="ml-auto flex h-full items-center">
          <button aria-label="护眼模式">
            <Icon>
              <path d="M.5 10c4-5.500 11-5.500 15 0-4 5.500-11 5.500-15 0zM8 1v3M3 2.500l1.500 2.500M13 2.500L11.500 5M.5 5l1.500 1.500M15.500 5L14 6.500" />
              <circle cx="8" cy="10" r="2.500" />
            </Icon>
          </button>
          <button aria-label="阅读模式" className="ml-[7px] flex items-center gap-1">
            <Icon><path d="M5.500 1.500h5v13h-5zM.5 5.500h15v5H.5z" /></Icon>
            <Caret />
          </button>
          <span className="ml-[14px] h-4 w-px bg-[#dfe1e6]" />
          <button aria-label="普通视图" className="ml-[10px] flex size-6 items-center justify-center rounded-sm bg-[#dce0e6]">
            <Icon><path d="M.5 1.500h15v13H.5zM.5 5.500h15M.5 10.500h15M5.500 1.500v13M10.500 1.500v13" /></Icon>
          </button>
          <button aria-label="页面视图" className="ml-[6px]">
            <Icon><path d="M.5.5h15v15H.5zM3.500 3.500h4v9h-4zM8.500 3.500h4v9h-4z" /></Icon>
          </button>
          <button aria-label="分页预览" className="ml-[10px]">
            <Icon><path d="M.5 1.500h15v13H.5zM6.500 1.500v7h9M10.500 1.500v7" /></Icon>
          </button>
          <span className="ml-[14px] h-4 w-px bg-[#dfe1e6]" />
          <button className="ml-[10px] flex items-center gap-1 text-[13px]">
            {zoom}%
            <Caret />
          </button>
          <button aria-label="缩小" className="ml-3" onClick={() => setZoom(zoom - 10)}>
            <Icon w={11} h={11}><path d="M0 5.500h11" strokeWidth="2" /></Icon>
          </button>
          <input
            type="range"
            aria-label="缩放比例"
            min={10}
            max={190}
            value={zoom}
            onChange={(e) => setZoom(Number(e.target.value))}
            className="ml-[11px] h-3 w-[138px] appearance-none bg-[linear-gradient(90deg,#414f6e_50%,#cfd3dc_50%)] bg-[length:100%_1px] bg-center bg-no-repeat [&::-webkit-slider-thumb]:size-3 [&::-webkit-slider-thumb]:appearance-none [&::-webkit-slider-thumb]:rounded-full [&::-webkit-slider-thumb]:border [&::-webkit-slider-thumb]:border-[#444] [&::-webkit-slider-thumb]:bg-[#eee]"
          />
          <button aria-label="放大" className="ml-[11px]" onClick={() => setZoom(zoom + 10)}>
            <Icon w={11} h={11}><path d="M0 5.500h11M5.500 0v11" strokeWidth="2" /></Icon>
          </button>
          <button aria-label="全屏" className="mr-3 ml-3">
            <Icon w={15} h={15}><path d="M5 .5H.5V5M10 .5h4.500V5M5 14.500H.5V10M10 14.500h4.500V10M.5.5l4 4M14.500.5l-4 4M.5 14.500l4-4M14.500 14.500l-4-4" /></Icon>
          </button>
        </div>
      </div>
    </footer>
  );
}

function Watermark() {
  return (
    <div className="pointer-events-none absolute right-[10px] bottom-[6px] flex items-center opacity-80">
      <svg width="43" height="42" viewBox="0 0 43 42" aria-hidden="true">
        <defs>
          <linearGradient id="sky" x1="0" y1="1" x2="1" y2="0">
            <stop offset="0" stopColor="#2f7fc8" />
            <stop offset="1" stopColor="#5cc4ee" />
          </linearGradient>
          <linearGradient id="leaf" x1="0" y1="1" x2="1" y2="0">
            <stop offset="0" stopColor="#e6c83c" />
            <stop offset="1" stopColor="#35b56b" />
          </linearGradient>
        </defs>
        <path d="M43 1C22-2 2 12 1 24c0 3 1 5 3 6C4 20 15 6 43 1z" fill="url(#sky)" />
        <path d="M36 6C20 8 6 18 7 27c1 6 10 7 16 3 5-3 6-8 1-8-3 0-6 2-6 4-3-1-1-6 5-8 8-2 11 4 5 11-6 6-17 8-23 3C1 22 12 8 36 6z" fill="url(#sky)" />
        <path d="M31 12c8-1 12 4 10 11C38 33 24 42 3 40c14-2 28-8 31-17 2-6 0-10-3-11z" fill="url(#leaf)" />
      </svg>
      <div className="flex flex-col">
        <span className="text-[21px] leading-[23px] font-bold text-[#3f8fd8]">极光下载站</span>
        <span className="font-['Liberation_Sans'] text-[17px] leading-[19px] font-bold text-[#5cc687]">www.xz7.com</span>
      </div>
    </div>
  );
}

export default function App() {
  return (
    <div className="relative flex h-screen flex-col overflow-hidden bg-white font-['Noto_Sans','Noto_Sans_CJK_SC',sans-serif] text-xs whitespace-nowrap">
      <TitleBar />
      <MenuBar />
      <Ribbon />
      <div className="flex min-h-0 flex-1 bg-[#f6f7f9]">
        <main className="flex min-w-0 flex-1 flex-col">
          <FormulaBar />
          <div className="flex min-h-0 flex-1">
            <Grid />
            <VerticalScroll />
          </div>
          <SheetBar />
        </main>
        <SideBar />
      </div>
      <div className="bg-[#f6f7f9]">
        <StatusBar />
      </div>
      <Watermark />
    </div>
  );
}
